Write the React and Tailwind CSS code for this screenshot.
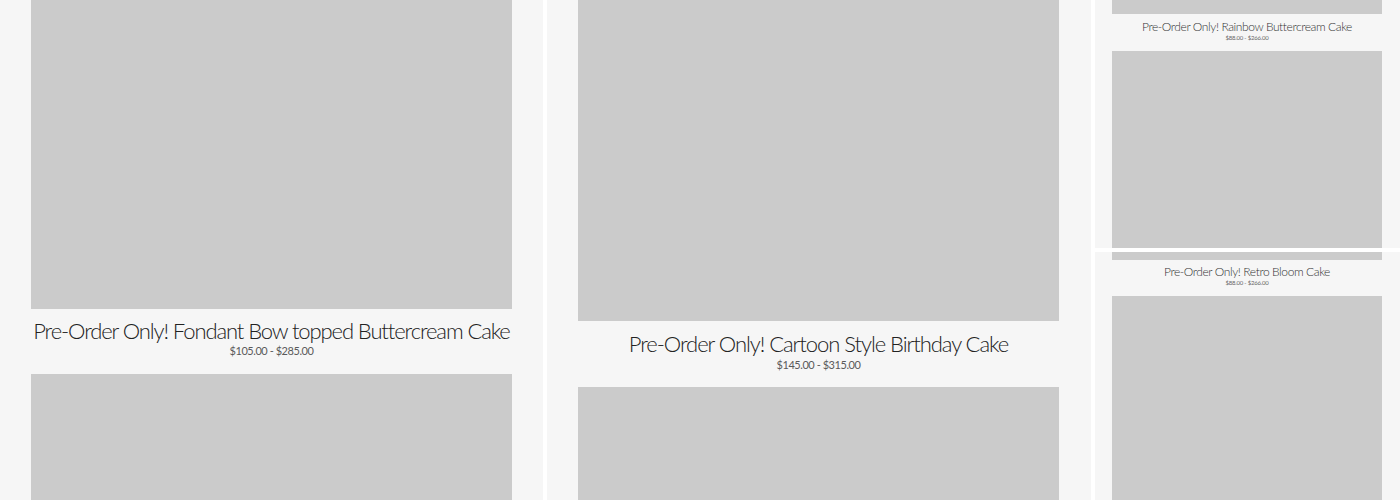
const font = { fontFamily: 'Lato, "Open Sans", sans-serif' };

function Photo({ className }) {
  return <div className={`w-full bg-[#cbcbcb] ${className}`} />;
}

export default function App() {
  return (
    <div className="flex h-[500px] w-[1400px] gap-1 overflow-hidden bg-white font-light" style={font}>
      {/* left column */}
      <div className="flex w-[543px] shrink-0 flex-col items-center bg-[#f6f6f6] px-[31px]">
        <Photo className="h-[309px] shrink-0" />
        <p className="mt-[11px] whitespace-nowrap text-[22px] leading-none tracking-[-1.1px] text-[#222]">Pre-Order Only! Fondant Bow topped Buttercream Cake</p>
        <p className="mt-[3px] whitespace-nowrap text-[11px] font-normal leading-none tracking-[-0.45px] text-[#5a5a5a]">$105.00 - $285.00</p>
        <Photo className="mt-[18px] flex-1" />
      </div>

      {/* middle column */}
      <div className="flex w-[544px] shrink-0 flex-col items-center bg-[#f6f6f6] pl-[31px] pr-[32px]">
        <Photo className="h-[321px] shrink-0" />
        <p className="mt-[12px] whitespace-nowrap text-[22px] leading-none tracking-[-1.05px] text-[#222]">Pre-Order Only! Cartoon Style Birthday Cake</p>
        <p className="mt-[4px] whitespace-nowrap text-[11px] font-normal leading-none tracking-[-0.45px] text-[#5a5a5a]">$145.00 - $315.00</p>
        <Photo className="mt-[17px] flex-1" />
      </div>

      {/* right column */}
      <div className="flex w-[305px] shrink-0 flex-col gap-1">
        <div className="flex h-[248px] shrink-0 flex-col items-center bg-[#f6f6f6] pl-[17px] pr-[18px]">
          <Photo className="h-[14px] shrink-0" />
          <p className="mt-[7px] whitespace-nowrap text-[12px] leading-none tracking-[-0.4px] text-[#333]">Pre-Order Only! Rainbow Buttercream Cake</p>
          <p className="mt-[2px] whitespace-nowrap text-[6px] font-normal leading-none tracking-[-0.2px] text-[#666]">$88.00 - $266.00</p>
          <Photo className="mt-[10px] flex-1" />
        </div>
        <div className="flex flex-1 flex-col items-center bg-[#f6f6f6] pl-[17px] pr-[18px]">
          <Photo className="h-[8px] shrink-0" />
          <p className="mt-[6px] whitespace-nowrap text-[12px] leading-none tracking-[-0.4px] text-[#333]">Pre-Order Only! Retro Bloom Cake</p>
          <p className="mt-[2px] whitespace-nowrap text-[6px] font-normal leading-none tracking-[-0.2px] text-[#666]">$88.00 - $266.00</p>
          <Photo className="mt-[10px] flex-1" />
        </div>
      </div>
    </div>
  );
}
